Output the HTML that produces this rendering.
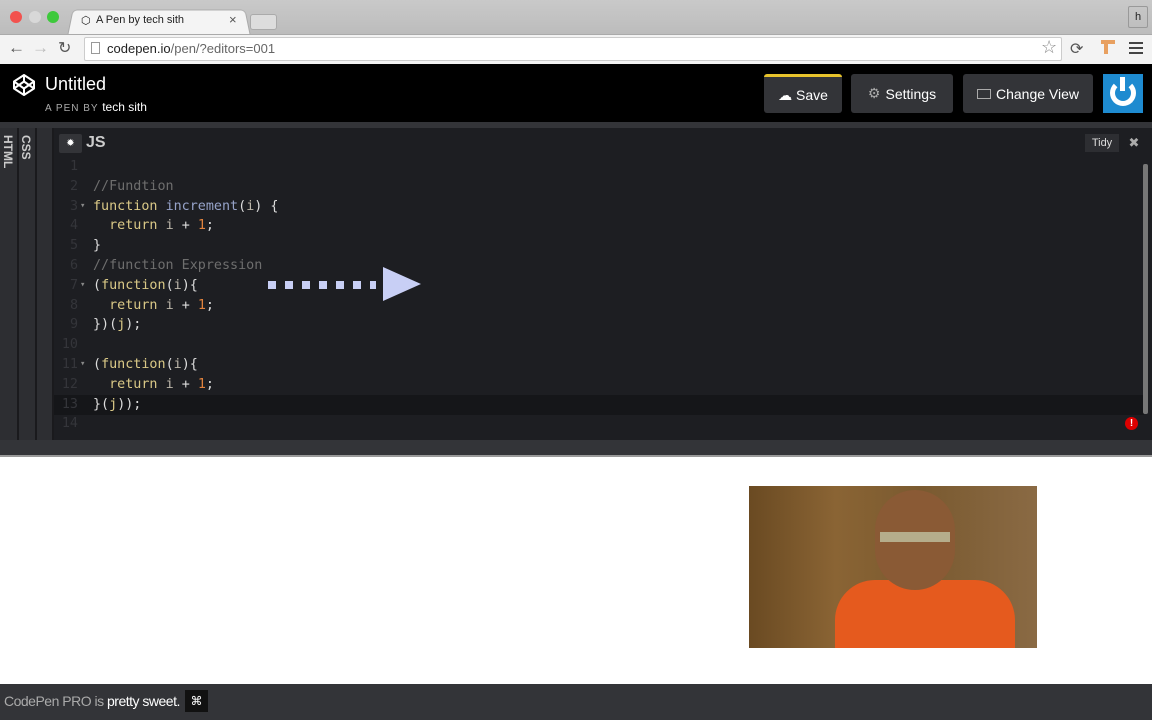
<!DOCTYPE html>
<html><head><meta charset="utf-8"><style>
*{margin:0;padding:0;box-sizing:border-box}
body{width:1152px;height:720px;overflow:hidden;position:relative;font-family:"Liberation Sans",sans-serif;background:#fff}
.a{position:absolute}
.code{font-family:"DejaVu Sans Mono","Liberation Mono",monospace;font-size:13.4px;line-height:19.8px;white-space:pre}
.btn{position:absolute;top:74px;height:39px;background:#333438;border-radius:3px;color:#fff;font-size:14px;display:flex;align-items:center;justify-content:center;gap:5px}
.k{color:#dac987}.n{color:#96a3c9}.c{color:#6e6e6e}.o{color:#e0823d}.w{color:#ddd}.v{color:#bdb7aa}
</style></head><body>
<div class="a" style="left:0;top:0;width:1152px;height:34px;background:linear-gradient(#c9c9c9,#bcbcbc)"></div>
<div class="a" style="left:10px;top:11px;width:12px;height:12px;border-radius:50%;background:#f2524e"></div>
<div class="a" style="left:29px;top:11px;width:12px;height:12px;border-radius:50%;background:#d8d8d8"></div>
<div class="a" style="left:47px;top:11px;width:12px;height:12px;border-radius:50%;background:#3ec93c"></div>
<div class="a" style="left:70px;top:9px;width:178px;height:26px;background:#f4f4f4;border-radius:5px 5px 0 0;border:1px solid #aaa;border-bottom:none;transform:perspective(60px) rotateX(8deg)"></div>
<div class="a" style="left:81px;top:14px;font-size:11px;color:#222">⬡</div>
<div class="a" style="left:96px;top:14px;font-size:11px;color:#222">A Pen by tech sith</div>
<div class="a" style="left:229px;top:12px;font-size:13px;color:#555">×</div>
<div class="a" style="left:250px;top:14px;width:27px;height:16px;background:#ddd;border:1px solid #aaa;border-radius:3px"></div>
<div class="a" style="left:1128px;top:6px;width:20px;height:22px;border:1px solid #999;border-radius:2px;font-size:11px;text-align:center;line-height:20px;color:#222">h</div>
<div class="a" style="left:0;top:34px;width:1152px;height:30px;background:#f3f3f3;border-top:1px solid #aaa"></div>
<div class="a" style="left:8px;top:38px;font-size:17px;color:#555">←</div>
<div class="a" style="left:32px;top:38px;font-size:17px;color:#bbb">→</div>
<div class="a" style="left:58px;top:38px;font-size:16px;color:#555">↻</div>
<div class="a" style="left:84px;top:37px;width:978px;height:24px;background:#fff;border:1px solid #ccc;border-radius:2px"></div>
<div class="a" style="left:91px;top:42px;width:9px;height:12px;border:1px solid #999"></div>
<div class="a" style="left:107px;top:41px;font-size:13px;color:#222">codepen.io<span style="color:#666">/pen/?editors=001</span></div>
<div class="a" style="left:1041px;top:37px;font-size:18px;color:#888">☆</div>
<div class="a" style="left:1070px;top:39px;font-size:16px;color:#555">⟳</div>
<div class="a" style="left:1101px;top:40px;width:14px;height:4px;background:#e8a060"></div>
<div class="a" style="left:1104px;top:40px;width:4px;height:14px;background:#e8a060"></div>
<div class="a" style="left:1129px;top:42px;width:14px;height:2px;background:#444;box-shadow:0 5px #444,0 10px #444"></div>
<div class="a" style="left:0;top:64px;width:1152px;height:58px;background:#000"></div>
<svg class="a" style="left:12px;top:73px" width="24" height="24" viewBox="0 0 24 24" fill="none" stroke="#fff" stroke-width="2" stroke-linejoin="round"><path d="M12 2 22 8.5v7L12 22 2 15.5v-7z M12 2v6.5 M12 22v-6.5 M2 8.5l10 7 10-7 M2 15.5l10-7 10 7"/></svg>
<div class="a" style="left:45px;top:74px;font-size:18px;color:#fff">Untitled</div>
<div class="a" style="left:45px;top:100px;font-size:10px;letter-spacing:1px;color:#aaa">A PEN BY <span style="color:#fff;letter-spacing:0;font-size:12px">tech sith</span></div>
<div class="btn" style="left:764px;width:78px;border-top:3px solid #e7c32c">☁ Save</div>
<div class="btn" style="left:851px;width:102px"><span style="color:#aaa">⚙</span> Settings</div>
<div class="btn" style="left:963px;width:130px"><span style="display:inline-block;width:14px;height:10px;border:1px solid #aaa"></span> Change View</div>
<div class="a" style="left:1103px;top:74px;width:40px;height:39px;background:#1e8bd0"></div>
<div class="a" style="left:1110px;top:80px;width:26px;height:26px;border:5px solid #fff;border-radius:50%;border-top-color:transparent"></div>
<div class="a" style="left:1120px;top:77px;width:5px;height:14px;background:#fff"></div>
<div class="a" style="left:0;top:122px;width:1152px;height:6px;background:#333438"></div>
<div class="a" style="left:0;top:128px;width:54px;height:312px;background:#2d2e32"></div>
<div class="a" style="left:17px;top:128px;width:2px;height:312px;background:#1a1a1d"></div>
<div class="a" style="left:35px;top:128px;width:2px;height:312px;background:#1a1a1d"></div>
<div class="a" style="left:52px;top:128px;width:2px;height:312px;background:#1a1a1d"></div>
<div class="a" style="left:1px;top:135px;font-size:12px;font-weight:bold;color:#ccc;writing-mode:vertical-rl">HTML</div>
<div class="a" style="left:19px;top:135px;font-size:12px;font-weight:bold;color:#ccc;writing-mode:vertical-rl">CSS</div>
<div class="a" style="left:54px;top:128px;width:1098px;height:312px;background:#1d1e22"></div>
<div class="a" style="left:59px;top:134px;width:23px;height:19px;background:#333438;border-radius:2px;color:#fff;font-size:10px;text-align:center;line-height:19px">✹</div>
<div class="a" style="left:86px;top:134px;font-size:16px;font-weight:bold;color:#ccc">JS</div>
<div class="a" style="left:1085px;top:134px;width:34px;height:18px;background:#2d2e32;color:#ddd;font-size:11px;text-align:center;line-height:18px">Tidy</div>
<div class="a" style="left:1124px;top:134px;width:20px;height:18px;color:#aaa;font-size:13px;text-align:center;line-height:18px">✖</div>
<div class="a" style="left:54px;top:395px;width:1090px;height:20px;background:#151619"></div>
<div class="a" style="left:1143px;top:164px;width:5px;height:250px;background:#777;border-radius:2px"></div>
<div class="a code" style="left:58px;top:157px;width:20px;text-align:right;color:#34353a">1
2
3
4
5
6
7
8
9
10
11
12
13
14</div>
<div class="a code" style="left:80px;top:157px;color:#888;font-size:9px">

▾



▾



▾</div>
<div class="a code" style="left:93px;top:157px">
<span class="c">//Fundtion</span>
<span class="k">function</span> <span class="n">increment</span><span class="w">(</span><span class="v">i</span><span class="w">) {</span>
  <span class="k">return</span> <span class="v">i</span> <span class="w">+</span> <span class="o">1</span><span class="w">;</span>
<span class="w">}</span>
<span class="c">//function Expression</span>
<span class="w">(</span><span class="k">function</span><span class="w">(</span><span class="v">i</span><span class="w">){</span>
  <span class="k">return</span> <span class="v">i</span> <span class="w">+</span> <span class="o">1</span><span class="w">;</span>
<span class="w">})(</span><span class="k">j</span><span class="w">);</span>

<span class="w">(</span><span class="k">function</span><span class="w">(</span><span class="v">i</span><span class="w">){</span>
  <span class="k">return</span> <span class="v">i</span> <span class="w">+</span> <span class="o">1</span><span class="w">;</span>
<span class="w">}(</span><span class="k">j</span><span class="w">));</span></div>
<div class="a" style="left:268px;top:281px;width:108px;height:8px;background:repeating-linear-gradient(90deg,#c8cff5 0 8px,transparent 8px 17px)"></div>
<div class="a" style="left:383px;top:267px;width:0;height:0;border-left:38px solid #c8cff5;border-top:17px solid transparent;border-bottom:17px solid transparent"></div>
<div class="a" style="left:1125px;top:417px;width:13px;height:13px;border-radius:50%;background:#d00;color:#fff;font-size:10px;font-weight:bold;text-align:center;line-height:13px">!</div>
<div class="a" style="left:0;top:440px;width:1152px;height:15px;background:#333438"></div>
<div class="a" style="left:0;top:455px;width:1152px;height:2px;background:#999"></div>
<div class="a" style="left:749px;top:486px;width:288px;height:162px;background:linear-gradient(90deg,#6a4a22,#8a6434 30%,#7a5a30 60%,#8a6a44)"></div>
<div class="a" style="left:835px;top:580px;width:180px;height:68px;background:#e55a1e;border-radius:40px 40px 0 0"></div>
<div class="a" style="left:875px;top:490px;width:80px;height:100px;background:#8a5a35;border-radius:40px"></div>
<div class="a" style="left:880px;top:532px;width:70px;height:10px;background:#c8d0b0;opacity:.7"></div>
<div class="a" style="left:0;top:684px;width:1152px;height:36px;background:#333438"></div>
<div class="a" style="left:4px;top:693px;font-size:14px;color:#aaa;letter-spacing:-.5px">CodePen PRO is <span style="color:#fff">pretty sweet.</span></div>
<div class="a" style="left:185px;top:690px;width:23px;height:22px;background:#111;color:#fff;font-size:12px;text-align:center;line-height:22px">⌘</div>
</body></html>
